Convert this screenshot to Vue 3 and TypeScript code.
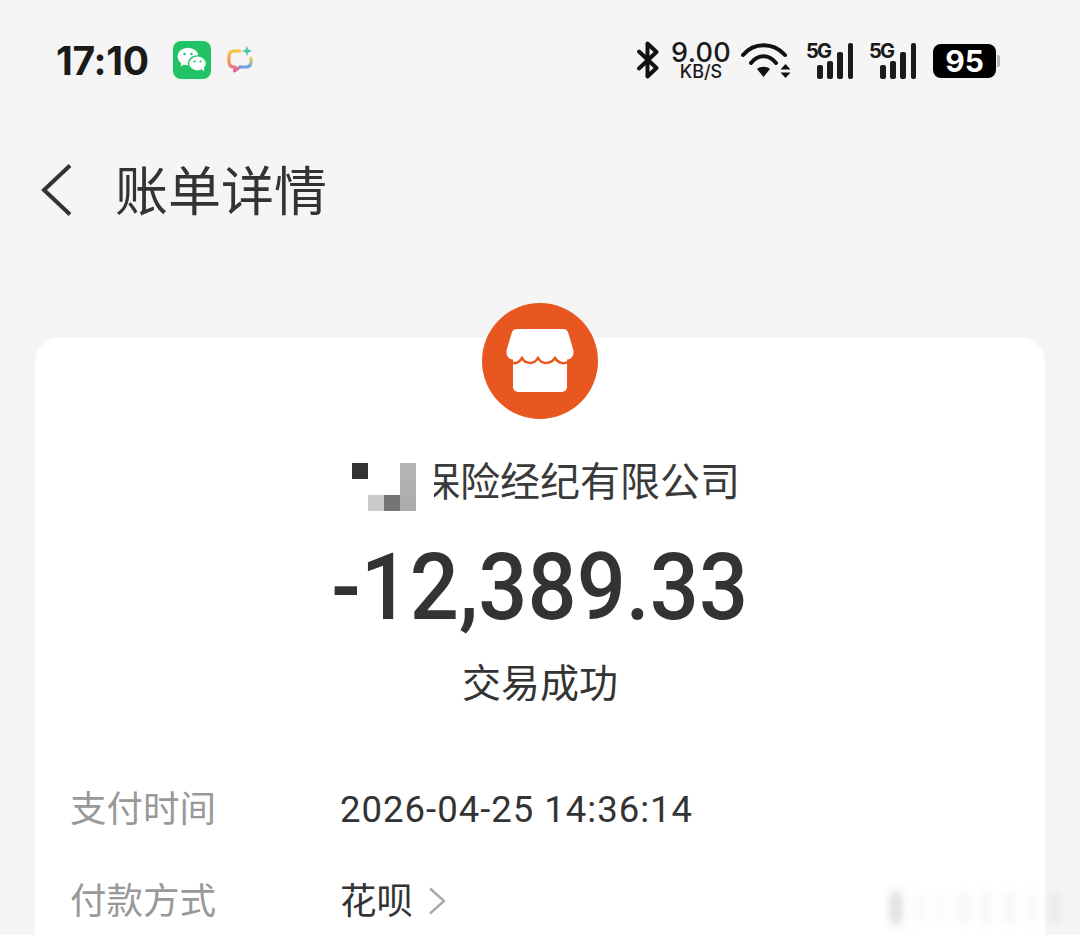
<script setup lang="ts">
const rows = [
  { label: '支付时间', value: '2026-04-25 14:36:14', link: false },
  { label: '付款方式', value: '花呗', link: true },
]

// mosaic blocks over the merchant name: [col, row, colour]
const mosaic: [number, number, string][] = [
  [0, 0, '#333333'],
  [3, 0, '#b4b4b4'],
  [3, 1, '#b0b0b0'],
  [1, 2, '#cacaca'],
  [2, 2, '#757575'],
  [3, 2, '#adadad'],
]

const blurBars = [
  { w: 12, o: 0.24 }, { w: 9, o: 0.05 }, { w: 12, o: 0.04 }, { w: 10, o: 0.07 }, { w: 10, o: 0.07 },
  { w: 12, o: 0.06 }, { w: 10, o: 0.06 }, { w: 12, o: 0.08 },
]
</script>

<template>
  <div class="page">
    <header class="status">
      <span class="time">17:10</span>
      <svg class="wechat" viewBox="0 0 38 38" width="38" height="38">
        <rect width="38" height="38" rx="8" fill="#22c364" />
        <ellipse cx="15" cy="15.500" rx="10.500" ry="8.700" fill="#fff" />
        <path d="M8.500 21l-.8 4.400 4.600-2.600z" fill="#fff" />
        <ellipse cx="24.500" cy="22.500" rx="9" ry="7.600" fill="#fff" stroke="#22c364" stroke-width="1.400" />
        <path d="M28.500 28l2.800 2.600-.4-4z" fill="#fff" />
        <circle cx="11.500" cy="13" r="1.200" fill="#22c364" />
        <circle cx="18.500" cy="13" r="1.200" fill="#22c364" />
        <circle cx="21.500" cy="20.500" r="1.100" fill="#22c364" />
        <circle cx="27.500" cy="20.500" r="1.100" fill="#22c364" />
      </svg>
      <svg class="bubble" viewBox="0 0 26 30" width="26" height="30">
        <defs>
          <linearGradient id="rainbowLeft" x1="0" y1="0" x2="0" y2="1">
            <stop offset="0" stop-color="#f5c344" />
            <stop offset="0.55" stop-color="#f0935a" />
            <stop offset="1" stop-color="#e75f9c" />
          </linearGradient>
          <linearGradient id="rainbowRight" x1="0" y1="0" x2="0" y2="1">
            <stop offset="0" stop-color="#f2cf56" />
            <stop offset="1" stop-color="#6a9fee" />
          </linearGradient>
        </defs>
        <path d="M13 6H7.500C4 6 2 8 2 11.500v5C2 20 4 22 7.500 22H8l-.5 4 5.500-4" fill="none" stroke="url(#rainbowLeft)" stroke-width="3.200" stroke-linecap="round" stroke-linejoin="round" />
        <path d="M13 22h5.500c3.500 0 5.500-2 5.500-5.500V13" fill="none" stroke="url(#rainbowRight)" stroke-width="3.200" stroke-linecap="round" stroke-linejoin="round" />
        <path d="M20 1l1.400 3.600L25 6l-3.600 1.400L20 11l-1.400-3.600L15 6l3.600-1.400z" fill="#4fc7a8" />
      </svg>

      <div class="indicators">
        <svg class="bt" viewBox="0 0 24 38" width="24" height="38">
          <path d="M3 10.500L20.500 27 11.500 35.500V2.500L20.500 11 3 27.500" fill="none" stroke="#111" stroke-width="4" stroke-linecap="round" stroke-linejoin="round" />
        </svg>
        <div class="speed">
          <span class="speed-num">9.00</span>
          <span class="speed-unit">KB/S</span>
        </div>
        <svg class="wifi" viewBox="0 0 52 38" width="52" height="38">
          <path d="M3 14C14 1 33 1 45 14M11 22C18 13 29 13 36 22" fill="none" stroke="#111" stroke-width="4" stroke-linecap="round" />
          <path d="M17 28C20 25 27 25 30 28L23.500 36z" fill="#111" />
          <path d="M40.500 28.500l5-5.500 5 5.500zM40.500 31.500h10l-5 5.500z" fill="#111" />
        </svg>
        <div class="signal">
          <span class="five-g">5G</span>
          <span class="bar b1"></span>
          <span class="bar b2"></span>
          <span class="bar b3"></span>
          <span class="bar b4"></span>
        </div>
        <div class="signal">
          <span class="five-g">5G</span>
          <span class="bar b1"></span>
          <span class="bar b2"></span>
          <span class="bar b3"></span>
          <span class="bar b4"></span>
        </div>
        <div class="battery">
          <span class="battery-body">95</span>
          <span class="battery-nub"></span>
        </div>
      </div>
    </header>

    <nav class="nav">
      <svg viewBox="0 0 32 54" width="32" height="54">
        <path d="M29 2.500L3 27l26 24.500" fill="none" stroke="#333" stroke-width="4" />
      </svg>
      <h1 class="title">账单详情</h1>
    </nav>

    <main class="card">
      <svg class="logo" viewBox="0 0 116 116" width="116" height="116">
        <circle cx="58" cy="58" r="58" fill="#e8571f" />
        <path d="M35 26h46c2.800 0 4.600 1.400 5.300 4l5 17c1 4-1 9.500-6 9.500H30.700c-5 0-7-5.500-6-9.500l5-17c.7-2.600 2.500-4 5.300-4z" fill="#fff" />
        <rect x="31" y="50" width="54" height="39" rx="5" fill="#fff" />
        <path d="M28 58C33 62 37 60 40 55 43 61 52 62 56 55 60 62 69 61 73 55 76 60 82 62 88 58" fill="none" stroke="#e8571f" stroke-width="2.500" />
      </svg>

      <div class="merchant">
        <span class="mosaic" aria-hidden="true">
          <i
            v-for="(m, i) in mosaic"
            :key="i"
            class="cell"
            :style="{ gridColumn: m[0] + 1, gridRow: m[1] + 1, background: m[2] }"
          ></i>
          <i class="mask"></i>
        </span>
        <span class="merchant-text">保险经纪有限公司</span>
      </div>

      <div class="amount">-12,389.33</div>
      <div class="result">交易成功</div>

      <dl class="rows">
        <div v-for="row in rows" :key="row.label" class="row">
          <dt class="label">{{ row.label }}</dt>
          <dd class="value" :class="{ 'is-time': !row.link }">
            <span>{{ row.value }}</span>
            <svg v-if="row.link" class="more" viewBox="0 0 20 30" width="20" height="30">
              <path d="M3 2.500L17 15 3 27.500" fill="none" stroke="#a8a8a8" stroke-width="2.400" />
            </svg>
          </dd>
        </div>
      </dl>
    </main>

    <div class="watermark" aria-hidden="true">
      <i v-for="(b, i) in blurBars" :key="i" :style="{ width: b.w + 'px', opacity: b.o }"></i>
    </div>
  </div>
</template>

<style scoped>
.page {
  position: relative;
  height: 935px;
  overflow: hidden;
  background: #f5f5f5;
  font-family: "Noto Sans CJK SC", "Noto Sans", sans-serif;
  color: #333;
}

.status {
  display: flex;
  align-items: center;
  height: 120px;
  padding: 0 80px 0 56px;
}

.time {
  width: 117px;
  font-family: Inter, sans-serif;
  font-size: 39px;
  font-weight: 700;
  letter-spacing: -0.3px;
  color: #1a1a1a;
}

.bubble {
  margin-left: 16px;
}

.indicators {
  display: flex;
  align-items: center;
  margin-left: auto;
}

.bt {
  display: block;
}

.speed {
  display: flex;
  flex-direction: column;
  align-items: center;
  width: 58px;
  margin-left: 12px;
  font-family: Inter, sans-serif;
  color: #1a1a1a;
}

.speed-num {
  font-size: 27px;
  font-weight: 500;
  line-height: 22px;
  letter-spacing: 0.3px;
}

.speed-unit {
  font-size: 18px;
  font-weight: 500;
  line-height: 15px;
}

.wifi {
  margin-left: 10px;
}

.signal {
  position: relative;
  display: flex;
  align-items: flex-end;
  gap: 4.700px;
  width: 48px;
  height: 37px;
  margin-left: 15px;
  padding-left: 10px;
  box-sizing: border-box;
}

.signal + .signal {
  margin-left: 15px;
}

.five-g {
  position: absolute;
  left: -1px;
  top: -2px;
  font-family: Inter, sans-serif;
  font-size: 20px;
  font-weight: 700;
  letter-spacing: -1.800px;
  line-height: 22px;
  color: #1a1a1a;
}

.bar {
  width: 5.500px;
  border-radius: 2px;
  background: #1a1a1a;
}

.b1 { height: 14px; }
.b2 { height: 18px; }
.b3 { height: 27px; }
.b4 { height: 36px; }

.battery {
  display: flex;
  align-items: center;
  margin-left: 15px;
  margin-top: 2px;
}

.battery-body {
  width: 63px;
  height: 34px;
  border-radius: 8px;
  background: #000;
  color: #fff;
  font-family: Inter, sans-serif;
  font-size: 30px;
  font-weight: 700;
  line-height: 34px;
  text-align: center;
}

.battery-nub {
  width: 3px;
  height: 12px;
  margin-left: 1px;
  border-radius: 0 2px 2px 0;
  background: #b5b5b5;
}

.nav {
  display: flex;
  align-items: center;
  height: 140px;
  padding-left: 41px;
}

.title {
  margin: -4px 0 0 42px;
  font-size: 53px;
  font-weight: 400;
  line-height: 70px;
  color: #333;
}

.card {
  display: flex;
  flex-direction: column;
  align-items: center;
  height: 700px;
  margin: 78px 35px 0;
  border-radius: 24px;
  background: #fff;
}

.logo {
  display: block;
  margin-top: -35px;
}

.merchant {
  display: flex;
  align-items: center;
  width: 400px;
  height: 56px;
  margin-top: 32px;
}

.mosaic {
  position: relative;
  display: grid;
  grid-template-columns: repeat(4, 16px);
  grid-template-rows: repeat(3, 16px);
  flex: none;
  width: 80px;
  height: 48px;
  margin-top: 16px;
  padding-left: 12px;
  box-sizing: border-box;
}

.cell {
  display: block;
}

/* hides the left radical of the first character */
.mask {
  position: absolute;
  left: 76px;
  top: -12px;
  width: 18px;
  height: 60px;
  background: #fff;
}

.merchant-text {
  font-size: 40px;
  line-height: 56px;
  white-space: nowrap;
  color: #3a3a3a;
}

.amount {
  margin-top: 26px;
  font-family: Roboto, sans-serif;
  font-size: 92px;
  font-weight: 500;
  line-height: 110px;
  transform: scaleX(0.94);
  color: #333;
}

.result {
  margin-top: 9px;
  font-size: 39px;
  line-height: 56px;
  color: #333;
}

.rows {
  align-self: stretch;
  display: flex;
  flex-direction: column;
  gap: 36px;
  margin: 71px 0 0;
  padding: 0 35px;
}

.row {
  display: flex;
  align-items: center;
  height: 56px;
}

.label {
  width: 270px;
  font-size: 36.500px;
  line-height: 56px;
  color: #999;
}

.value {
  display: flex;
  align-items: center;
  gap: 14px;
  margin: 0;
  font-family: "Noto Sans CJK SC", sans-serif;
  font-size: 36.500px;
  line-height: 56px;
  color: #333;
}

.is-time {
  padding-top: 6px;
  font-family: Roboto, sans-serif;
  letter-spacing: 1px;
}

.more {
  display: block;
  margin-top: 4px;
}

.watermark {
  position: absolute;
  left: 890px;
  top: 892px;
  display: flex;
  gap: 12px;
  height: 32px;
  filter: blur(4px);
}

.watermark i {
  display: block;
  height: 32px;
  background: #777;
}
</style>

<style>
html,
body {
  margin: 0;
  background: #f5f5f5;
}
</style>
